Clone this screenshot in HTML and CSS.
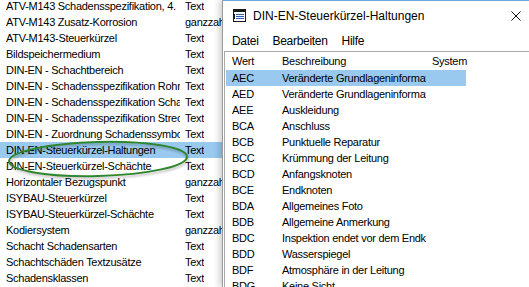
FILE: index.html
```html
<html>
<head>
   <link rel="stylesheet" href="styles.css">
</head>
<body>
<div class="screen">
  <div class="tablelist">
    <div class="trow"><span class="tname">ATV-M143 Schadensspezifikation, 4.</span><span class="ttype">Text</span></div>
    <div class="trow"><span class="tname">ATV-M143 Zusatz-Korrosion</span><span class="ttype">ganzzahlig</span></div>
    <div class="trow"><span class="tname">ATV-M143-Steuerkürzel</span><span class="ttype">Text</span></div>
    <div class="trow"><span class="tname">Bildspeichermedium</span><span class="ttype">Text</span></div>
    <div class="trow"><span class="tname">DIN-EN - Schachtbereich</span><span class="ttype">Text</span></div>
    <div class="trow"><span class="tname">DIN-EN - Schadensspezifikation Rohr</span><span class="ttype">Text</span></div>
    <div class="trow"><span class="tname">DIN-EN - Schadensspezifikation Schacht</span><span class="ttype">Text</span></div>
    <div class="trow"><span class="tname">DIN-EN - Schadensspezifikation Strecke</span><span class="ttype">Text</span></div>
    <div class="trow"><span class="tname">DIN-EN - Zuordnung Schadenssymbole</span><span class="ttype">Text</span></div>
    <div class="trow selected"><span class="tname">DIN-EN-Steuerkürzel-Haltungen</span><span class="ttype">Text</span></div>
    <div class="trow"><span class="tname">DIN-EN-Steuerkürzel-Schächte</span><span class="ttype">Text</span></div>
    <div class="trow"><span class="tname">Horizontaler Bezugspunkt</span><span class="ttype">ganzzahlig</span></div>
    <div class="trow"><span class="tname">ISYBAU-Steuerkürzel</span><span class="ttype">Text</span></div>
    <div class="trow"><span class="tname">ISYBAU-Steuerkürzel-Schächte</span><span class="ttype">Text</span></div>
    <div class="trow"><span class="tname">Kodiersystem</span><span class="ttype">ganzzahlig</span></div>
    <div class="trow"><span class="tname">Schacht Schadensarten</span><span class="ttype">Text</span></div>
    <div class="trow"><span class="tname">Schachtschäden Textzusätze</span><span class="ttype">Text</span></div>
    <div class="trow"><span class="tname">Schadensklassen</span><span class="ttype">Text</span></div>
    <div class="trow"><span class="tname">Schadensklassen Schacht</span><span class="ttype">Text</span></div>
  </div>

  <svg class="marker" width="200" height="50" viewBox="0 0 200 50">
    <ellipse cx="98" cy="24" rx="89" ry="17" transform="rotate(-1.5 98 24)" fill="none" stroke="#2f862f" stroke-width="2"/>
  </svg>

  <div class="window">
    <div class="titlebar">
      <svg class="appicon" width="13" height="13" viewBox="0 0 13 13">
        <rect x="0.5" y="0.5" width="12" height="12" fill="#fff" stroke="#1a1a1a"/>
        <rect x="1" y="1" width="11" height="2" fill="#1a1a1a"/>
        <rect x="3" y="5" width="8" height="1" fill="#2b5fc4"/>
        <rect x="3" y="7" width="8" height="1" fill="#2b5fc4"/>
        <rect x="3" y="9" width="8" height="1" fill="#2b5fc4"/>
        <rect x="1" y="5" width="1" height="5" fill="#1a1a1a"/>
      </svg>
      <span class="title">DIN-EN-Steuerkürzel-Haltungen</span>
      <svg class="close" width="10" height="10" viewBox="0 0 10 10">
        <path d="M0.5 0.5 L9.5 9.5 M9.5 0.5 L0.5 9.5" stroke="#111" stroke-width="1"/>
      </svg>
    </div>
    <div class="menubar">
      <span class="menu">Datei</span>
      <span class="menu">Bearbeiten</span>
      <span class="menu">Hilfe</span>
    </div>
    <div class="listbox">
      <div class="lhead">
        <span class="c-wert">Wert</span><span class="c-desc">Beschreibung</span><span class="c-sys">System</span>
      </div>
      <div class="lrow selected"><span class="c-wert">AEC</span><span class="c-desc">Veränderte Grundlageninformation</span><span class="c-sys"></span></div>
      <div class="lrow"><span class="c-wert">AED</span><span class="c-desc">Veränderte Grundlageninformation</span><span class="c-sys"></span></div>
      <div class="lrow"><span class="c-wert">AEE</span><span class="c-desc">Auskleidung</span><span class="c-sys"></span></div>
      <div class="lrow"><span class="c-wert">BCA</span><span class="c-desc">Anschluss</span><span class="c-sys"></span></div>
      <div class="lrow"><span class="c-wert">BCB</span><span class="c-desc">Punktuelle Reparatur</span><span class="c-sys"></span></div>
      <div class="lrow"><span class="c-wert">BCC</span><span class="c-desc">Krümmung der Leitung</span><span class="c-sys"></span></div>
      <div class="lrow"><span class="c-wert">BCD</span><span class="c-desc">Anfangsknoten</span><span class="c-sys"></span></div>
      <div class="lrow"><span class="c-wert">BCE</span><span class="c-desc">Endknoten</span><span class="c-sys"></span></div>
      <div class="lrow"><span class="c-wert">BDA</span><span class="c-desc">Allgemeines Foto</span><span class="c-sys"></span></div>
      <div class="lrow"><span class="c-wert">BDB</span><span class="c-desc">Allgemeine Anmerkung</span><span class="c-sys"></span></div>
      <div class="lrow"><span class="c-wert">BDC</span><span class="c-desc">Inspektion endet vor dem Endknoten</span><span class="c-sys"></span></div>
      <div class="lrow"><span class="c-wert">BDD</span><span class="c-desc">Wasserspiegel</span><span class="c-sys"></span></div>
      <div class="lrow"><span class="c-wert">BDF</span><span class="c-desc">Atmosphäre in der Leitung</span><span class="c-sys"></span></div>
      <div class="lrow"><span class="c-wert">BDG</span><span class="c-desc">Keine Sicht</span><span class="c-sys"></span></div>
    </div>
  </div>
</div>
</body>
</html>
```

FILE: styles.css
```css
  * {
     box-sizing: border-box;
  }
  body {
     margin: 0;
     background: #fff;
     overflow: hidden;
  }
  .screen {
     position: relative;
     display: flex;
     width: 529px;
     height: 287px;
     overflow: hidden;
     font: 11px "Liberation Sans", Arial, sans-serif;
     letter-spacing: -0.27px;
     color: #000;
  }

  /* table list in the background */
  .tablelist {
     width: 222px;
     flex: none;
     margin-top: -2px;
     overflow: hidden;
  }
  .trow {
     display: flex;
     height: 16px;
     line-height: 16px;
     white-space: nowrap;
  }
  .trow.selected {
     background: #99c9ef;
  }
  .tname {
     width: 180px;
     flex: none;
     padding-left: 6px;
     overflow: hidden;
  }
  .ttype {
     padding-left: 5px;
     overflow: hidden;
  }

  .marker {
     position: absolute;
     left: 0px;
     top: 135px;
     filter: drop-shadow(1px 2px 1px rgba(0,0,0,0.25));
  }

  /* dialog window */
  .window {
     width: 309px;
     flex: none;
     background: #fff;
     border-top: 1px solid #6fa7dc;
     border-left: 1px solid #9a9a9a;
     box-shadow: -3px 0px 6px rgba(0,0,0,0.18);
     display: flex;
     flex-direction: column;
  }
  .titlebar {
     height: 30px;
     display: flex;
     align-items: center;
     padding-left: 10px;
     font-size: 12px;
     letter-spacing: 0px;
  }
  .appicon {
     flex: none;
     margin-top: -1px;
  }
  .title {
     margin-left: 7px;
     flex: 1;
  }
  .close {
     margin-right: 10px;
     margin-top: -1px;
  }
  .menubar {
     height: 20px;
     display: flex;
     align-items: center;
     gap: 14px;
     padding-left: 9px;
     font-size: 12px;
     letter-spacing: -0.3px;
  }
  .listbox {
     flex: 1;
     margin-left: 1px;
     border: 1px solid #a9a9a9;
     border-bottom: none;
     padding: 1px 1px 0 1px;
     overflow: hidden;
  }
  .lhead, .lrow {
     display: flex;
     height: 16px;
     line-height: 16px;
     white-space: nowrap;
  }
  .lhead {
     height: 17px;
     line-height: 17px;
  }
  .lrow.selected .c-wert,
  .lrow.selected .c-desc,
  .lrow.selected .c-sys {
     background: #99c9ef;
  }
  .c-wert, .c-desc, .c-sys {
     flex: none;
     padding-left: 6px;
     overflow: hidden;
  }
  .c-wert {
     width: 50px;
  }
  .c-desc {
     width: 150px;
  }
  .c-sys {
     width: 40px;
  }
  .lhead .c-sys {
     overflow: visible;
  }
```
